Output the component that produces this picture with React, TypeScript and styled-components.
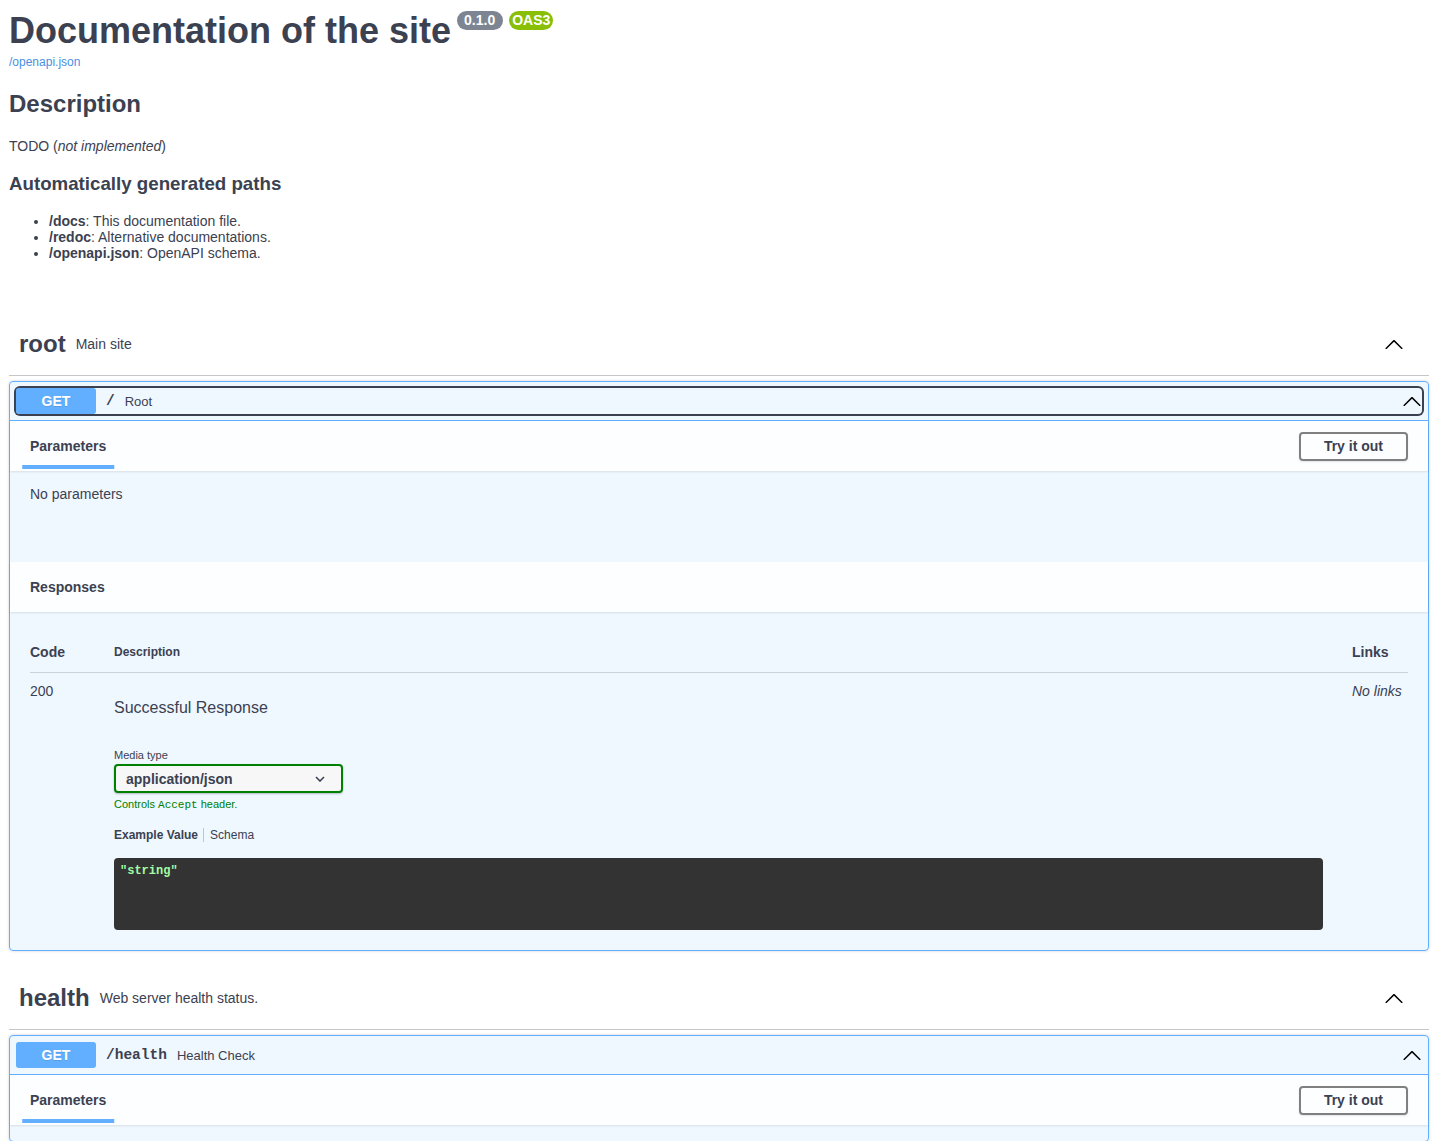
import React from "react";
import styled, { createGlobalStyle } from "styled-components";

const GlobalStyle = createGlobalStyle`
  html, body {
    margin: 0;
    padding: 0;
    background: #fff;
  }
  body {
    font-family: "Liberation Sans", Arial, sans-serif;
    color: #3b4151;
  }
`;

const Page = styled.div`
  padding: 10px 9px 0;
`;

const Info = styled.div`
  margin: 0 0 51px;
`;

const Title = styled.h2`
  margin: 0;
  display: flex;
  align-items: flex-start;
  gap: 6px;
  font-size: 36px;
  line-height: 41px;
  font-weight: 700;
  color: #3b4151;
`;

const Badges = styled.span`
  display: flex;
  gap: 6px;
  margin-top: 1px;
`;

const Badge = styled.small<{ $bg: string; $pad: string }>`
  display: inline-block;
  padding: ${(p) => p.$pad};
  border-radius: 57px;
  background: ${(p) => p.$bg};
  color: #fff;
  font-size: 14px;
  line-height: 15px;
  font-weight: 700;
`;

const SpecLink = styled.a`
  display: block;
  margin-top: 4px;
  font-size: 12px;
  line-height: 14px;
  color: #4990e2;
  text-decoration: none;
`;

const MdHeading = styled.h2`
  margin: 21px 0 20px;
  font-size: 24px;
  line-height: 28px;
  font-weight: 700;
`;

const MdText = styled.p`
  margin: 0 0 19px;
  font-size: 14px;
  line-height: 16px;
`;

const MdSubHeading = styled.h3`
  margin: 0 0 18px;
  font-size: 18.72px;
  line-height: 22px;
  font-weight: 700;
`;

const MdList = styled.ul`
  margin: 0;
  padding-left: 40px;
  font-size: 14px;
  line-height: 16px;
`;

const TagHeading = styled.h3`
  display: flex;
  align-items: center;
  height: 64px;
  box-sizing: border-box;
  padding: 10px 25px 10px 10px;
  margin: 0 0 5px;
  border-bottom: 1px solid rgba(59, 65, 81, 0.3);
  font-size: 24px;
  font-weight: 700;
  color: #3b4151;
`;

const TagSmall = styled.small`
  flex: 1;
  padding: 0 10px;
  font-size: 14px;
  font-weight: 400;
`;

const Opblock = styled.div`
  margin: 0 0 15px;
  border: 1px solid #61affe;
  border-radius: 4px;
  background: rgba(97, 175, 254, 0.1);
  box-shadow: 0 0 3px rgba(0, 0, 0, 0.19);
`;

const Summary = styled.div`
  padding: 6px;
  border-bottom: 1px solid #61affe;
`;

const SummaryControl = styled.div<{ $focused?: boolean }>`
  display: flex;
  align-items: center;
  height: 26px;
  border-radius: 4px;
  box-shadow: ${(p) => (p.$focused ? "0 0 0 2px #3b4151" : "none")};
`;

const Method = styled.span`
  width: 80px;
  height: 26px;
  line-height: 26px;
  text-align: center;
  border-radius: 3px;
  background: #61affe;
  color: #fff;
  font-size: 14px;
  font-weight: 700;
  text-shadow: 0 1px 0 rgba(0, 0, 0, 0.1);
`;

const PathText = styled.span`
  padding: 0 10px;
  font-family: "Liberation Mono", monospace;
  font-size: 14.5px;
  font-weight: 700;
  color: #3b4151;
`;

const SummaryDesc = styled.span`
  flex: 1;
  font-size: 13px;
  color: #3b4151;
`;

const SectionHeader = styled.div`
  display: flex;
  align-items: center;
  justify-content: space-between;
  min-height: 50px;
  box-sizing: border-box;
  padding: 8px 20px;
  background: rgba(255, 255, 255, 0.8);
  box-shadow: 0 1px 2px rgba(0, 0, 0, 0.1);
`;

const SectionTitle = styled.h4`
  margin: 0;
  font-size: 14px;
  line-height: 16px;
  font-weight: 700;
`;

const TabLabel = styled.span`
  position: relative;
  &::after {
    content: "";
    position: absolute;
    left: 50%;
    bottom: -15px;
    width: 120%;
    height: 4px;
    transform: translateX(-50%);
    background: #61affe;
  }
`;

const TryButton = styled.button`
  font-family: inherit;
  font-size: 14px;
  line-height: 15px;
  font-weight: 700;
  color: #3b4151;
  padding: 5px 23px;
  border: 2px solid gray;
  border-radius: 4px;
  background: transparent;
  box-shadow: 0 1px 2px rgba(0, 0, 0, 0.1);
`;

const NoParams = styled.div`
  min-height: 91px;
  box-sizing: border-box;
  padding: 15px 20px;
  font-size: 14px;
  line-height: 16px;
`;

const BodyTail = styled.div`
  height: 16px;
`;

const ResponsesInner = styled.div`
  padding: 20px;
`;

const ResponsesGrid = styled.div`
  display: grid;
  grid-template-columns: 84px 1fr 56px;
`;

const HeadCell = styled.div<{ $size: number }>`
  padding: 12px 0;
  border-bottom: 1px solid rgba(59, 65, 81, 0.2);
  font-size: ${(p) => p.$size}px;
  line-height: 16px;
  font-weight: 700;
`;

const Cell = styled.div<{ $italic?: boolean }>`
  padding-top: 10px;
  font-size: 14px;
  line-height: 16px;
  font-style: ${(p) => (p.$italic ? "italic" : "normal")};
`;

const DescCell = styled.div`
  padding: 10px 29px 0 0;
`;

const DescText = styled.p`
  margin: 16px 0 0;
  font-size: 16px;
  line-height: 18px;
`;

const MediaLabel = styled.small`
  display: block;
  margin: 32px 0 2px;
  font-size: 11px;
  line-height: 13px;
`;

const Select = styled.div`
  display: flex;
  align-items: center;
  justify-content: space-between;
  width: 229px;
  height: 29px;
  box-sizing: border-box;
  padding: 0 16px 0 10px;
  border: 2px solid green;
  border-radius: 4px;
  background: #f7f7f7;
  box-shadow: 0 1px 2px rgba(0, 0, 0, 0.25);
  font-size: 14px;
  font-weight: 700;
`;

const AcceptMsg = styled.small`
  display: block;
  margin-top: 5px;
  font-size: 11px;
  line-height: 13px;
  color: green;
  code {
    font-family: "Liberation Mono", monospace;
    font-size: 11px;
  }
`;

const Tabs = styled.ul`
  display: flex;
  margin: 16px 0 0;
  padding: 0;
  list-style: none;
  font-size: 12px;
  line-height: 14px;
`;

const Tab = styled.li<{ $active?: boolean; $first?: boolean }>`
  position: relative;
  padding-right: ${(p) => (p.$first ? "12px" : "0")};
  font-weight: ${(p) => (p.$active ? 700 : 400)};
  &::after {
    content: "";
    display: ${(p) => (p.$first ? "block" : "none")};
    position: absolute;
    top: 0;
    right: 6px;
    width: 1px;
    height: 100%;
    background: rgba(0, 0, 0, 0.2);
  }
`;

const CodeBlock = styled.pre`
  margin: 16px 0 0;
  min-height: 72px;
  box-sizing: border-box;
  padding: 6px;
  border-radius: 4px;
  background: #333;
  font-family: "Liberation Mono", monospace;
  font-size: 12px;
  line-height: 14px;
  font-weight: 700;
  color: #a2fca2;
`;

const ArrowUp = ({ size = 20 }: { size?: number }) => (
  <svg width={size} height={size} viewBox="0 0 20 20" fill="#000">
    <path d="M17.418 14.908c.272.268.709.268.979 0s.271-.701 0-.969l-7.908-7.83c-.27-.268-.707-.268-.979 0l-7.908 7.83c-.27.268-.27.701 0 .969.271.268.709.268.979 0L10 7.767l7.418 7.141z" />
  </svg>
);

const ArrowDownSmall = () => (
  <svg width="10" height="6" viewBox="0 0 10 6">
    <path d="M1 1l4 4 4-4" fill="none" stroke="#3b4151" strokeWidth="1.6" />
  </svg>
);

interface OperationProps {
  path: string;
  summary: string;
  example?: string;
  focused?: boolean;
}

function Operation({ path, summary, example, focused }: OperationProps) {
  return (
    <Opblock>
      <Summary>
        <SummaryControl $focused={focused}>
          <Method>GET</Method>
          <PathText>{path}</PathText>
          <SummaryDesc>{summary}</SummaryDesc>
          <ArrowUp />
        </SummaryControl>
      </Summary>
      <SectionHeader>
        <SectionTitle>
          <TabLabel>Parameters</TabLabel>
        </SectionTitle>
        <TryButton>Try it out</TryButton>
      </SectionHeader>
      {example === undefined ? (
        <BodyTail />
      ) : (
        <>
          <NoParams>No parameters</NoParams>
          <SectionHeader>
            <SectionTitle>Responses</SectionTitle>
          </SectionHeader>
          <ResponsesInner>
            <ResponsesGrid>
              <HeadCell $size={14}>Code</HeadCell>
              <HeadCell $size={12}>Description</HeadCell>
              <HeadCell $size={14}>Links</HeadCell>
              <Cell>200</Cell>
              <DescCell>
                <DescText>Successful Response</DescText>
                <MediaLabel>Media type</MediaLabel>
                <Select>
                  application/json
                  <ArrowDownSmall />
                </Select>
                <AcceptMsg>
                  Controls <code>Accept</code> header.
                </AcceptMsg>
                <Tabs>
                  <Tab $active $first>Example Value</Tab>
                  <Tab>Schema</Tab>
                </Tabs>
                <CodeBlock>{example}</CodeBlock>
              </DescCell>
              <Cell $italic>No links</Cell>
            </ResponsesGrid>
          </ResponsesInner>
        </>
      )}
    </Opblock>
  );
}

export default function App(): React.ReactElement {
  return (
    <>
      <GlobalStyle />
      <Page>
        <Info>
          <Title>
            Documentation of the site
            <Badges>
              <Badge $bg="#7d8492" $pad="2px 8px 2px 7px">0.1.0</Badge>
              <Badge $bg="#89bf04" $pad="2px 3px">OAS3</Badge>
            </Badges>
          </Title>
          <SpecLink href="#">/openapi.json</SpecLink>
          <MdHeading>Description</MdHeading>
          <MdText>
            TODO (<em>not implemented</em>)
          </MdText>
          <MdSubHeading>Automatically generated paths</MdSubHeading>
          <MdList>
            <li><strong>/docs</strong>: This documentation file.</li>
            <li><strong>/redoc</strong>: Alternative documentations.</li>
            <li><strong>/openapi.json</strong>: OpenAPI schema.</li>
          </MdList>
        </Info>

        <TagHeading>
          <span>root</span>
          <TagSmall>Main site</TagSmall>
          <ArrowUp />
        </TagHeading>
        <Operation path="/" summary="Root" example={'"string"'} focused />

        <TagHeading>
          <span>health</span>
          <TagSmall>Web server health status.</TagSmall>
          <ArrowUp />
        </TagHeading>
        <Operation path="/health" summary="Health Check" />
      </Page>
    </>
  );
}
